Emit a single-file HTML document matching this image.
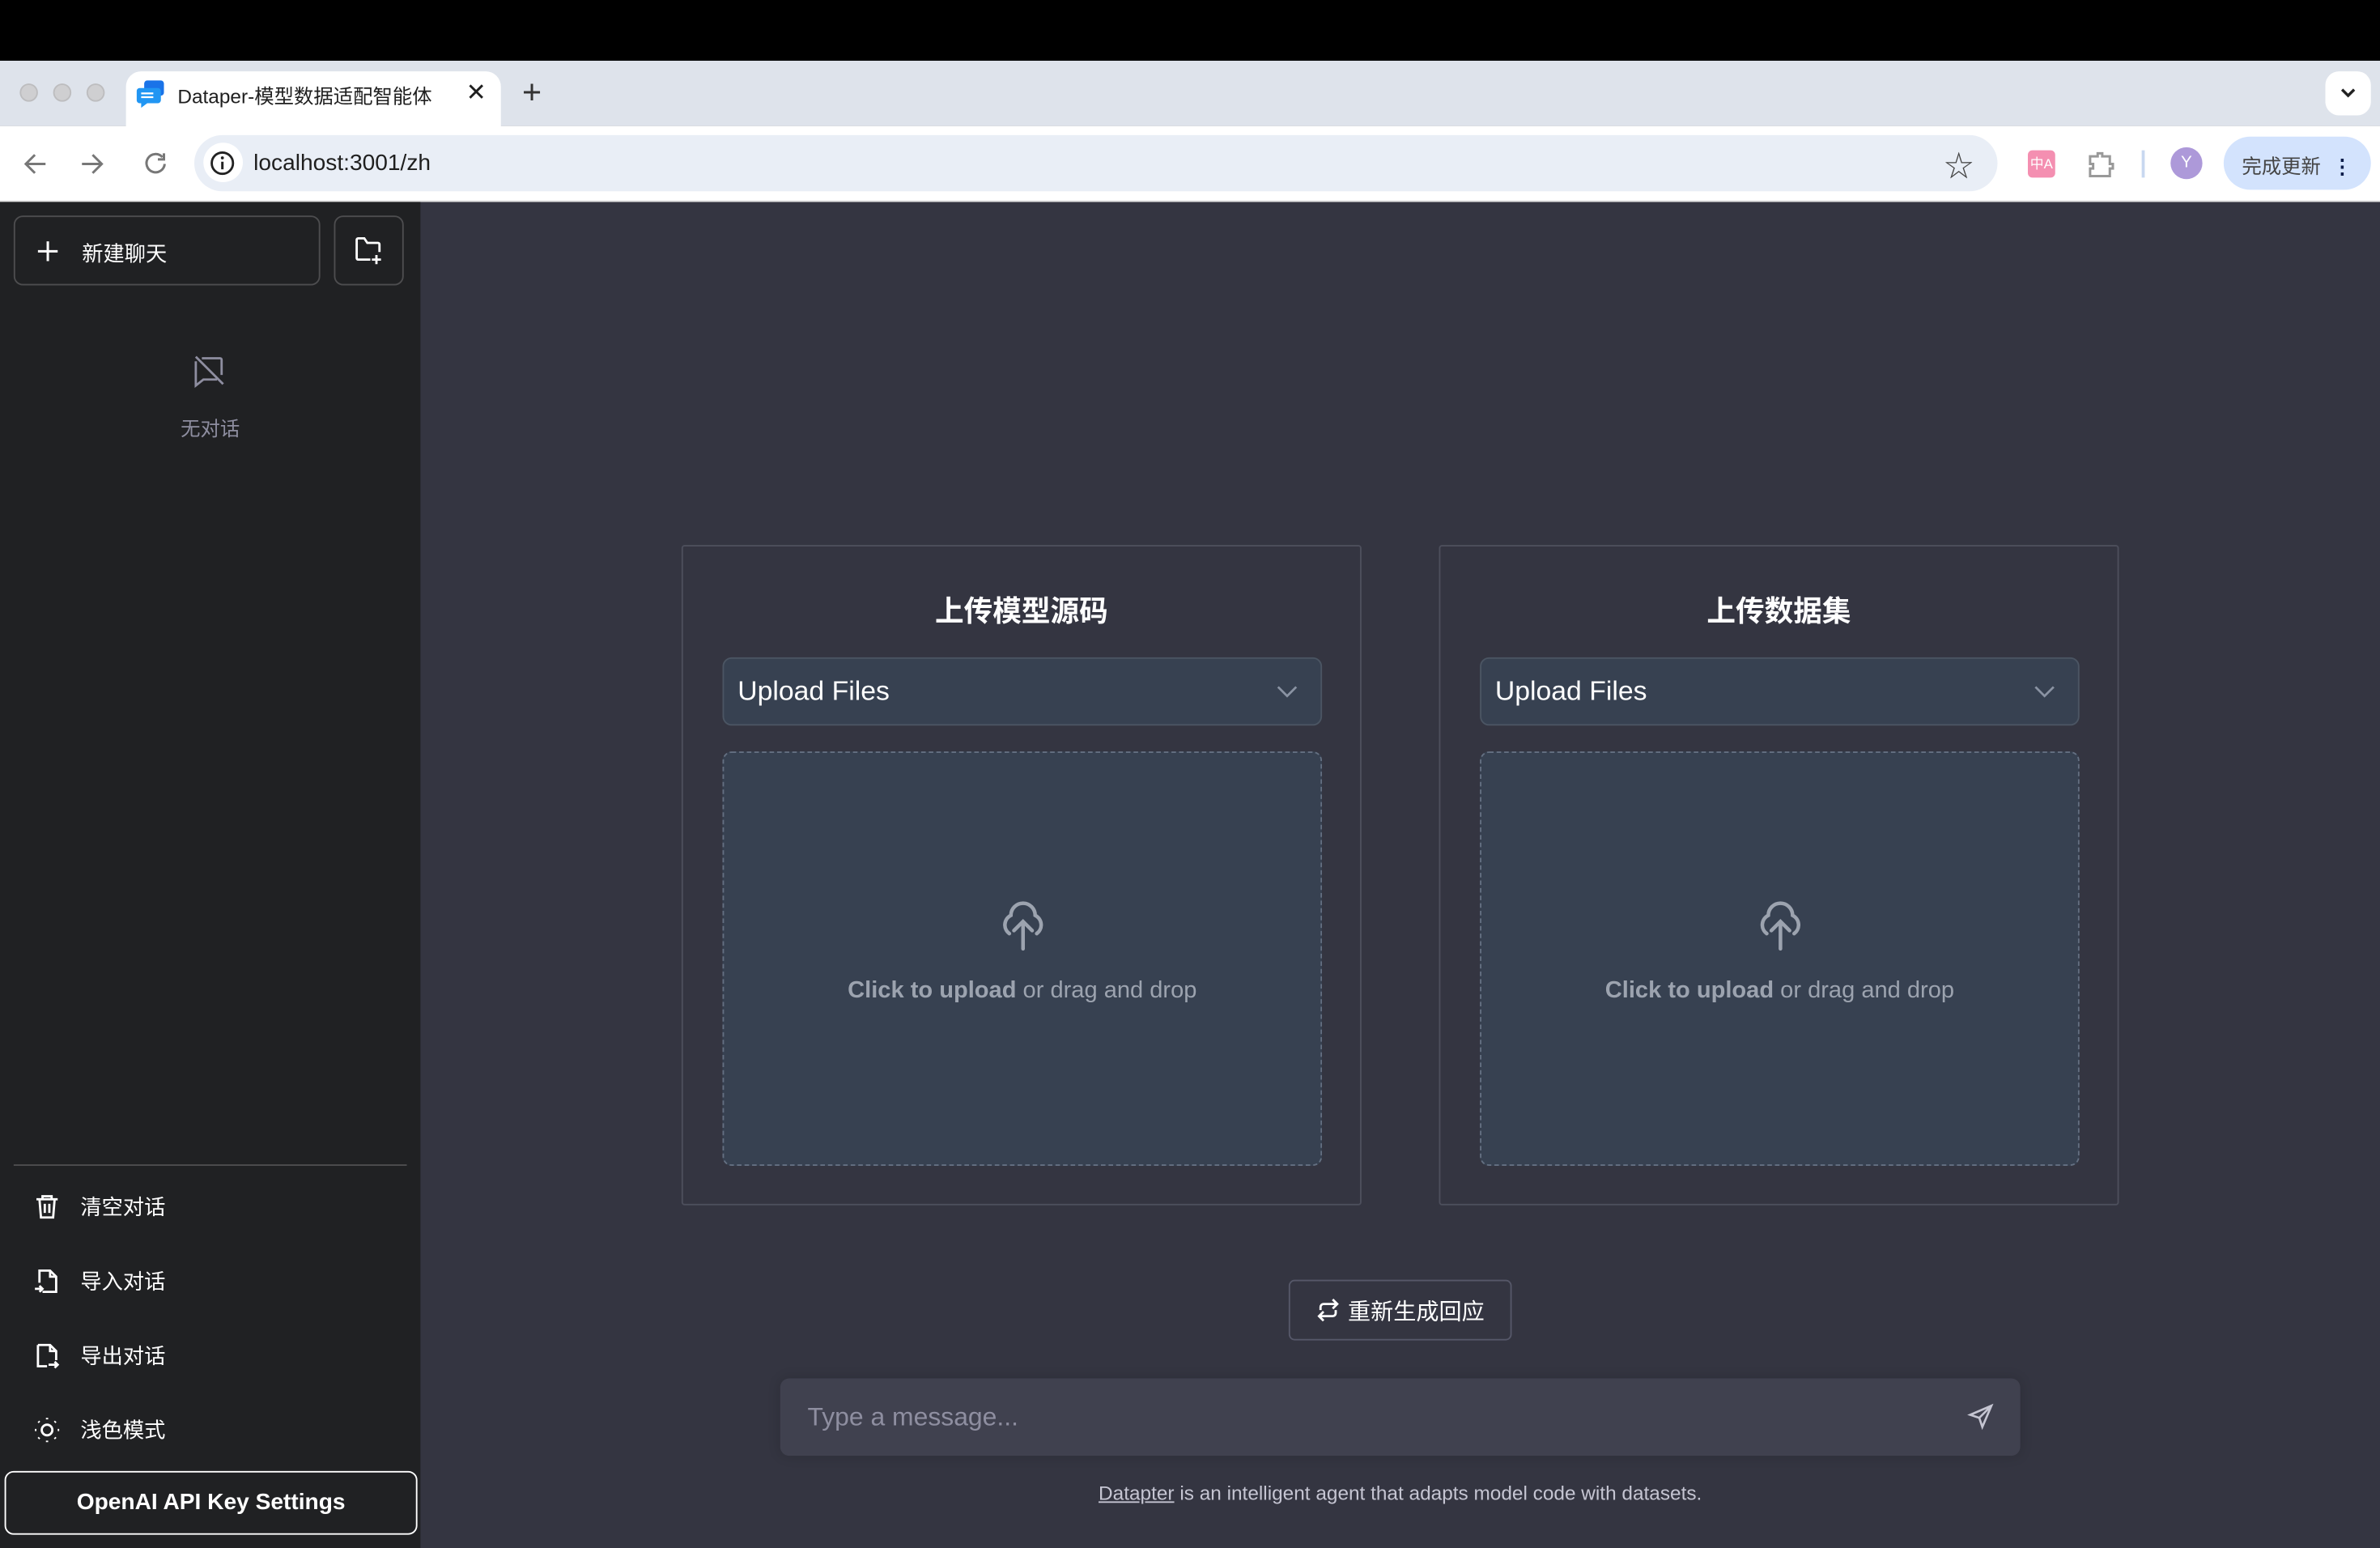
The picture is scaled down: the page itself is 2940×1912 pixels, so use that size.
<!DOCTYPE html>
<html><head><meta charset="utf-8"><style>
*{box-sizing:border-box;margin:0;padding:0}
html,body{width:2940px;height:1912px;overflow:hidden;background:#343541}
#w{width:1568px;height:1020px;transform:scale(1.875);transform-origin:0 0;position:relative;font-family:"Liberation Sans","Noto Sans CJK SC",sans-serif}
.a{position:absolute}
.dot{position:absolute;top:55px;width:12px;height:12px;border-radius:50%;background:#cfcfd1;border:1px solid #bdbdbf}
.mi{position:absolute;left:22px;color:#fff;font-size:14px;display:flex;align-items:center;gap:13px;height:20px}
.card{position:absolute;top:359px;width:448px;height:435px;border:1px solid #4d4f5c;border-radius:2px}
.card h2{position:absolute;top:28px;width:100%;text-align:center;color:#fff;font-size:19px;font-weight:bold}
.sel{position:absolute;left:26px;top:73px;width:395px;height:45px;background:#374151;border:1px solid #4b5563;border-radius:6px;color:#fff;font-size:18px;padding:11px 0 0 9px}
.sel svg{position:absolute;right:15px;top:17px}
.drop{position:absolute;left:26px;top:135px;width:395px;height:273px;background:#374151;border:1.5px dashed #647082;border-radius:6px}
.drop p{position:absolute;top:148px;width:100%;text-align:center;font-size:15.5px;color:#9ca3af}
</style></head><body><div id="w">
<div class="a" style="left:0;top:0;width:1568px;height:40px;background:#000"></div>
<div class="a" style="left:0;top:40px;width:1568px;height:43px;background:#dee3eb"></div>
<div class="dot" style="left:13px"></div><div class="dot" style="left:35px"></div><div class="dot" style="left:57px"></div>
<div class="a" style="left:83px;top:47px;width:247px;height:40px;background:#fff;border-radius:10px 10px 0 0"></div>
<svg class="a" style="left:90px;top:52px" width="20" height="20" viewBox="0 0 20 20"><rect x="5" y="1" width="13" height="10" rx="2" fill="#1a73e8"/><path d="M2 6h12a2 2 0 0 1 2 2v6a2 2 0 0 1-2 2H7l-4 3v-3H2a2 2 0 0 1-2-2V8a2 2 0 0 1 2-2z" fill="#2196f3"/><path d="M3 9.5h8M3 12h8" stroke="#fff" stroke-width="1.2"/></svg>
<div class="a" style="left:117px;top:53px;font-size:13px;color:#1f1f1f">Dataper-模型数据适配智能体</div>
<div class="a" style="left:307px;top:51px;font-size:16px;color:#1f1f1f">✕</div>
<div class="a" style="left:344px;top:48px;font-size:22px;color:#333">+</div>
<div class="a" style="left:1532px;top:47px;width:30px;height:29px;background:#fff;border-radius:9px"></div>
<svg class="a" style="left:1541px;top:57px" width="12" height="8" viewBox="0 0 12 8" fill="none" stroke="#222" stroke-width="1.8"><path d="M2 2l4 4 4-4"/></svg>
<div class="a" style="left:0;top:83px;width:1568px;height:50px;background:#fff;border-bottom:1px solid #e0e0e0"></div>
<svg class="a" style="left:14px;top:98px" width="110" height="20" viewBox="0 0 110 20" fill="none" stroke="#777" stroke-width="1.6"><path d="M16 10H4M9 4l-6 6 6 6"/><path d="M40 10h12M47 4l6 6-6 6"/><path d="M93 5.5a6 6 0 1 0 1.5 4.5M94 3v4h-4"/></svg>
<div class="a" style="left:128px;top:89px;width:1188px;height:37px;background:#e9eef6;border-radius:19px"></div>
<div class="a" style="left:134px;top:94px;width:26px;height:26px;background:#fff;border-radius:50%"></div>
<svg class="a" style="left:138px;top:99px" width="17" height="17" viewBox="0 0 17 17"><circle cx="8.5" cy="8.5" r="7" fill="none" stroke="#222" stroke-width="1.5"/><path d="M8.5 7.5v5" stroke="#222" stroke-width="1.6"/><circle cx="8.5" cy="5" r="1" fill="#222"/></svg>
<div class="a" style="left:167px;top:99px;font-size:15px;color:#1f1f1f">localhost:3001/zh</div>
<div class="a" style="left:1281px;top:95px;font-size:19px;color:#444">☆</div>
<div class="a" style="left:1336px;top:99px;width:18px;height:18px;background:#f48fb1;border-radius:3px;color:#fff;font-size:9px;text-align:center;line-height:18px">中A</div>
<svg class="a" style="left:1375px;top:98px" width="20" height="20" viewBox="0 0 20 20" fill="none" stroke="#999" stroke-width="1.6"><path d="M2 5h5V3h3v2h5v5h2v3h-2v5H2v-5h2v-3H2z"/></svg>
<div class="a" style="left:1411px;top:99px;width:2px;height:18px;background:#c8d8f0"></div>
<div class="a" style="left:1430px;top:97px;width:21px;height:21px;border-radius:50%;background:#ad99d9;color:#fff;font-size:11px;text-align:center;line-height:21px">Y</div>
<div class="a" style="left:1465px;top:90px;width:97px;height:35px;border-radius:18px;background:#d3e3fd;font-size:13px;color:#444;padding:9px 0 0 12px">完成更新 <b style="color:#0b1d4a;margin-left:4px">⋮</b></div>
<div class="a" style="left:0;top:133px;width:277px;height:887px;background:#202123"></div>
<div class="a" style="left:9px;top:142px;width:202px;height:46px;border:1px solid #4d4d4f;border-radius:6px"></div>
<svg class="a" style="left:24px;top:158px" width="15" height="15" viewBox="0 0 15 15" stroke="#fff" stroke-width="1.6"><path d="M7.5 1v13M1 7.5h13"/></svg>
<div class="a" style="left:54px;top:157px;color:#fff;font-size:14px">新建聊天</div>
<div class="a" style="left:220px;top:142px;width:46px;height:46px;border:1px solid #4d4d4f;border-radius:6px"></div>
<svg class="a" style="left:233px;top:155px" width="20" height="20" viewBox="0 0 20 20" fill="none" stroke="#fff" stroke-width="1.5"><path d="M11 16H3a1 1 0 0 1-1-1V3a1 1 0 0 1 1-1h4l2 3h7a1 1 0 0 1 1 1v5M15 13v6M12 16h6"/></svg>
<svg class="a" style="left:126px;top:232px" width="24" height="24" viewBox="0 0 24 24" fill="none" stroke="#8e8ea0" stroke-width="1.5"><path d="M3 3l18 18M7 4h12a1 1 0 0 1 1 1v10M17 18H8l-5 4V6"/></svg>
<div class="a" style="left:0;top:272px;width:277px;text-align:center;font-size:13px;color:#8e8ea0">无对话</div>
<div class="a" style="left:9px;top:767px;width:259px;height:1px;background:#4d4d4f"></div>
<div class="mi" style="top:785px"><svg width="18" height="18" viewBox="0 0 18 18" fill="none" stroke="#fff" stroke-width="1.5"><path d="M2 4h14M6 4V2h6v2M4 4l1 12h8l1-12M7.5 7v6M10.5 7v6"/></svg>清空对话</div>
<div class="mi" style="top:834px"><svg width="18" height="18" viewBox="0 0 18 18" fill="none" stroke="#fff" stroke-width="1.5"><path d="M4 10V2h7l4 4v10H6M11 2v4h4M1 14h5M4 12l2 2-2 2"/></svg>导入对话</div>
<div class="mi" style="top:883px"><svg width="18" height="18" viewBox="0 0 18 18" fill="none" stroke="#fff" stroke-width="1.5"><path d="M3 2h8l4 4v6M11 2v4h4M3 2v14h6M10 15h6M14 13l2 2-2 2"/></svg>导出对话</div>
<div class="mi" style="top:932px"><svg width="18" height="18" viewBox="0 0 18 18" fill="none" stroke="#fff" stroke-width="1.5"><circle cx="9" cy="9" r="3.5"/><path d="M9 1v1M9 16v1M1 9h1M16 9h1M3.3 3.3l.7.7M14 14l.7.7M3.3 14.7l.7-.7M14 4l.7-.7"/></svg>浅色模式</div>
<div class="a" style="left:3px;top:969px;width:272px;height:42px;border:1px solid #fff;border-radius:6px;color:#fff;font-size:15px;font-weight:bold;text-align:center;line-height:40px">OpenAI API Key Settings</div>
<div class="card" style="left:449px"><h2>上传模型源码</h2><div class="sel">Upload Files<svg width="14" height="9" viewBox="0 0 14 9" fill="none" stroke="#8a93a3" stroke-width="1.5"><path d="M1 1.5l6 6 6-6"/></svg></div><div class="drop"><svg class="a" style="left:178px;top:92px" width="38" height="40" viewBox="0 0 38 40" fill="none" stroke="#9ca3af" stroke-width="2.4" stroke-linecap="round"><path d="M10 27a7 7 0 0 1 1-12 8 8 0 0 1 16 0 7 7 0 0 1 1 12M19 37V19M13 25l6-6 6 6"/></svg><p><b>Click to upload</b> or drag and drop</p></div></div>
<div class="card" style="left:948px"><h2>上传数据集</h2><div class="sel">Upload Files<svg width="14" height="9" viewBox="0 0 14 9" fill="none" stroke="#8a93a3" stroke-width="1.5"><path d="M1 1.5l6 6 6-6"/></svg></div><div class="drop"><svg class="a" style="left:178px;top:92px" width="38" height="40" viewBox="0 0 38 40" fill="none" stroke="#9ca3af" stroke-width="2.4" stroke-linecap="round"><path d="M10 27a7 7 0 0 1 1-12 8 8 0 0 1 16 0 7 7 0 0 1 1 12M19 37V19M13 25l6-6 6 6"/></svg><p><b>Click to upload</b> or drag and drop</p></div></div>
<div class="a" style="left:849px;top:843px;width:147px;height:40px;border:1px solid #565869;border-radius:4px"></div>
<svg class="a" style="left:867px;top:855px" width="16" height="16" viewBox="0 0 16 16" fill="none" stroke="#fff" stroke-width="1.5"><path d="M3 8V6a2 2 0 0 1 2-2h9M11 1l3 3-3 3M13 8v2a2 2 0 0 1-2 2H2M5 15l-3-3 3-3"/></svg>
<div class="a" style="left:888px;top:853px;color:#fff;font-size:15px">重新生成回应</div>
<div class="a" style="left:514px;top:908px;width:817px;height:51px;background:#40414f;border-radius:6px;box-shadow:0 0 8px rgba(0,0,0,.15);color:#8e8ea0;font-size:17px;padding:16px 0 0 18px">Type a message...</div>
<svg class="a" style="left:1296px;top:924px" width="18" height="18" viewBox="0 0 18 18" fill="none" stroke="#c5c5d2" stroke-width="1.4"><path d="M16 2L2 8l6 2 2 6zM8 10l8-8"/></svg>
<div class="a" style="left:514px;top:976px;width:817px;text-align:center;font-size:13px;color:#c5c5d2"><u>Datapter</u> is an intelligent agent that adapts model code with datasets.</div>
</div></body></html>
